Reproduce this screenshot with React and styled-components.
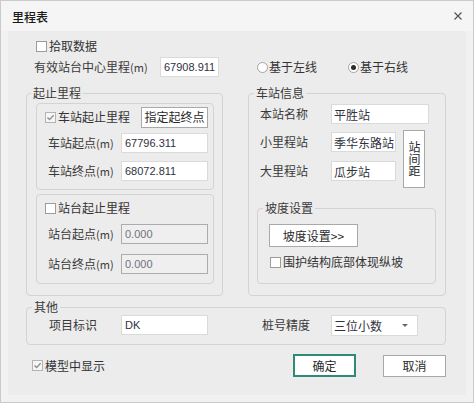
import React from "react";
import styled, { createGlobalStyle } from "styled-components";

const Global = createGlobalStyle`
  html, body { margin: 0; padding: 0; background: #ffffff; }
  * { box-sizing: border-box; }
  body { font-family: "Noto Sans CJK SC", "Noto Sans", sans-serif; font-size: 12px; color: #363636; }
`;

const FONT = `"Noto Sans CJK SC", "Noto Sans", sans-serif`;
const NUMFONT = `"Liberation Sans", "Noto Sans CJK SC", sans-serif`;

const Window = styled.div`
  width: 474px;
  height: 403px;
  border: 1px solid #cacaca;
  background: #f1f1f1;
  display: flex;
  flex-direction: column;
  font-family: ${FONT};
`;

const TitleBar = styled.div`
  height: 30px;
  background: #f5f5f5;
  display: flex;
  align-items: center;
  justify-content: space-between;
  padding: 0 10px 0 11px;
`;

const Title = styled.span`
  font-size: 12px;
  line-height: 16px;
  font-weight: 500;
  color: #1a1a1a;
  margin-top: 1px;
`;

const Close = styled.span`
  width: 10px;
  height: 10px;
  display: flex;
  align-items: center;
  justify-content: center;
`;

const Panel = styled.div`
  flex: 1;
  margin: 0 7px 7px 7px;
  background: #ececec;
  padding: 7px 20px 0 18px;
  display: flex;
  flex-direction: column;
`;

const Row = styled.div`
  display: flex;
  align-items: center;
  height: ${(p) => p.$h || 20}px;
  margin-top: ${(p) => p.$mt || 0}px;
  margin-left: ${(p) => p.$ml || 0}px;
  padding-left: ${(p) => p.$pl || 0}px;
  padding-right: ${(p) => p.$pr || 0}px;
  justify-content: ${(p) => p.$justify || "flex-start"};
`;

const Label = styled.span`
  font-size: 12px;
  line-height: 16px;
  color: #3a3a3a;
  white-space: nowrap;
  width: ${(p) => (p.$w ? `${p.$w}px` : "auto")};
  margin-left: ${(p) => p.$ml || 0}px;
  flex: none;
`;

const Unit = styled.span`
  font-size: 11px;
`;

const Input = styled.div`
  width: ${(p) => p.$w}px;
  height: ${(p) => p.$h || 20}px;
  border: 1px solid ${(p) => (p.$disabled ? "#acacac" : "#dadada")};
  background: ${(p) => (p.$disabled ? "#efefef" : "#ffffff")};
  display: flex;
  align-items: center;
  padding-left: ${(p) => p.$pl ?? 3}px;
  font-family: ${(p) => (p.$cjk ? FONT : NUMFONT)};
  font-size: ${(p) => (p.$cjk ? 12 : 11)}px;
  color: ${(p) => (p.$disabled ? "#6f7280" : "#30323d")};
  white-space: nowrap;
  overflow: hidden;
  flex: none;
  margin-left: ${(p) => p.$ml || 0}px;
`;

const Button = styled.div`
  width: ${(p) => p.$w}px;
  height: ${(p) => p.$h}px;
  border: ${(p) => (p.$primary ? "2px solid #2e8b7a" : "1px solid #a9a9a9")};
  background: #ffffff;
  display: flex;
  align-items: center;
  justify-content: center;
  font-size: 12px;
  line-height: 16px;
  color: #2a2a2a;
  flex: none;
  margin-left: ${(p) => p.$ml || 0}px;
  margin-top: ${(p) => p.$mt || 0}px;
`;

const VButton = styled(Button)`
  writing-mode: vertical-rl;
  line-height: 14px;
  letter-spacing: 0;
  padding-bottom: 1px;
`;

const CheckWrap = styled.label`
  display: flex;
  align-items: center;
  font-size: 12px;
  line-height: 16px;
  color: #333;
  white-space: nowrap;
`;

const Box = styled.span`
  width: 11px;
  height: 11px;
  border: 1px solid ${(p) => (p.$checked ? "#b4b4b4" : "#9c9c9c")};
  background: ${(p) => (p.$checked ? "#f6f6f6" : "#ffffff")};
  margin-right: 2px;
  display: flex;
  align-items: center;
  justify-content: center;
  flex: none;
`;

const RadioCircle = styled.span`
  width: 11px;
  height: 11px;
  border-radius: 50%;
  border: 1px solid #a3a3a3;
  background: #ffffff;
  margin-right: 1px;
  display: flex;
  align-items: center;
  justify-content: center;
  flex: none;
  &::after {
    content: "";
    width: 5px;
    height: 5px;
    border-radius: 50%;
    background: ${(p) => (p.$checked ? "#2b2b2b" : "transparent")};
  }
`;

const RadioWrap = styled.label`
  display: flex;
  align-items: center;
  width: ${(p) => p.$w || "auto"};
  font-size: 12px;
  line-height: 16px;
  color: #333;
  flex: none;
`;

const Group = styled.fieldset`
  margin: 0;
  margin-top: ${(p) => p.$mt || 0}px;
  margin-left: ${(p) => p.$ml || 0}px;
  padding: 0;
  border: 1px solid #d3d3d3;
  border-radius: 4px;
  width: ${(p) => p.$w}px;
  min-inline-size: 0;
  flex: none;
`;

const Legend = styled.legend`
  padding: 0 2px;
  margin-left: ${(p) => p.$ml ?? 5}px;
  font-size: 12px;
  line-height: 16px;
  color: #3a3a3a;
`;

const GroupBody = styled.div`
  display: flex;
  flex-direction: column;
  padding: ${(p) => p.$pad};
`;

const SubGroup = styled.div`
  border: 1px solid #d3d3d3;
  border-radius: 4px;
  display: flex;
  flex-direction: column;
  padding: ${(p) => p.$pad};
  margin-top: ${(p) => p.$mt || 0}px;
`;

const GroupsRow = styled.div`
  display: flex;
  gap: 25px;
  margin-top: 8px;
`;

const StationBlock = styled.div`
  display: flex;
  align-items: flex-start;
  margin-top: 6px;
`;

const StationCol = styled.div`
  display: flex;
  flex-direction: column;
  gap: 9px;
  margin-top: 2px;
`;

const SelectArrow = styled.span`
  margin-left: auto;
  margin-right: 9px;
  width: 0;
  height: 0;
  border-left: 3px solid transparent;
  border-right: 3px solid transparent;
  border-top: 3px solid #6a6a6a;
`;

const BottomRow = styled.div`
  display: flex;
  align-items: center;
  height: 23px;
  margin-top: 9px;
  padding-left: 6px;
`;

const Spacer = styled.span`
  flex: 1;
`;

const Check = ({ checked, children }) => (
  <CheckWrap>
    <Box $checked={checked}>
      {checked && (
        <svg width="9" height="9" viewBox="0 0 9 9">
          <path d="M1.5 4.5 L3.6 6.6 L7.6 2.2" fill="none" stroke="#8d8d8d" strokeWidth="1.4" />
        </svg>
      )}
    </Box>
    {children}
  </CheckWrap>
);

const Radio = ({ checked, children, w }) => (
  <RadioWrap $w={w}>
    <RadioCircle $checked={checked} />
    {children}
  </RadioWrap>
);

export default function App() {
  return (
    <>
      <Global />
      <Window>
        <TitleBar>
          <Title>里程表</Title>
          <Close>
            <svg width="8" height="8" viewBox="0 0 8 8">
              <path d="M0.5 0.5 L7.5 7.5 M7.5 0.5 L0.5 7.5" stroke="#555" strokeWidth="1.2" />
            </svg>
          </Close>
        </TitleBar>
        <Panel>
          <Row $h={16} $ml={10}>
            <Check>拾取数据</Check>
          </Row>
          <Row $mt={3} $ml={8}>
            <Label $w={126}>有效站台中心里程<Unit>(m)</Unit></Label>
            <Input $w={59}>67908.911</Input>
            <Row $ml={38}>
              <Radio w="91px">基于左线</Radio>
              <Radio checked>基于右线</Radio>
            </Row>
          </Row>

          <GroupsRow>
            <Group $w={197}>
              <Legend $ml={4}>起止里程</Legend>
              <GroupBody $pad="2px 8px 11px 9px">
                <SubGroup $pad="3px 5px 8px 8px">
                  <Row $justify="space-between">
                    <Check checked>车站起止里程</Check>
                    <Button $w={67} $h={21}>指定起终点</Button>
                  </Row>
                  <Row $mt={6} $justify="space-between">
                    <Label $ml={3}>车站起点<Unit>(m)</Unit></Label>
                    <Input $w={87}>67796.311</Input>
                  </Row>
                  <Row $mt={8} $justify="space-between">
                    <Label $ml={3}>车站终点<Unit>(m)</Unit></Label>
                    <Input $w={87}>68072.811</Input>
                  </Row>
                </SubGroup>
                <SubGroup $mt={4} $pad="5px 5px 9px 8px">
                  <Row $h={16}>
                    <Check>站台起止里程</Check>
                  </Row>
                  <Row $mt={8} $justify="space-between">
                    <Label $ml={3}>站台起点<Unit>(m)</Unit></Label>
                    <Input $w={87} $disabled>0.000</Input>
                  </Row>
                  <Row $mt={10} $justify="space-between">
                    <Label $ml={3}>站台终点<Unit>(m)</Unit></Label>
                    <Input $w={87} $disabled>0.000</Input>
                  </Row>
                </SubGroup>
              </GroupBody>
            </Group>

            <Group $w={198}>
              <Legend>车站信息</Legend>
              <GroupBody $pad="3px 0 10px 11px">
                <Row>
                  <Label $w={71}>本站名称</Label>
                  <Input $w={98} $cjk $pl={2}>平胜站</Input>
                </Row>
                <StationBlock>
                  <StationCol>
                    <Row>
                      <Label $w={71}>小里程站</Label>
                      <Input $w={65} $cjk $pl={2}>季华东路站</Input>
                    </Row>
                    <Row>
                      <Label $w={71}>大里程站</Label>
                      <Input $w={65} $cjk $pl={2}>瓜步站</Input>
                    </Row>
                  </StationCol>
                  <VButton $w={22} $h={58} $ml={7}>站间距</VButton>
                </StationBlock>
                <Group $w={179} $mt={12} $ml={-3}>
                  <Legend>坡度设置</Legend>
                  <GroupBody $pad="8px 0 13px 11px">
                    <Button $w={89} $h={23}>坡度设置&gt;&gt;</Button>
                    <Row $h={16} $mt={7} $pl={1}>
                      <Check>围护结构底部体现纵坡</Check>
                    </Row>
                  </GroupBody>
                </Group>
              </GroupBody>
            </Group>
          </GroupsRow>

          <Group $w={420} $mt={3}>
            <Legend>其他</Legend>
            <GroupBody $pad="0 0 9px 22px">
              <Row>
                <Label $w={72}>项目标识</Label>
                <Input $w={87}>DK</Input>
                <Label $w={69} $ml={54}>桩号精度</Label>
                <Input $w={87} $h={21} $cjk $pl={2}>
                  三位小数
                  <SelectArrow />
                </Input>
              </Row>
            </GroupBody>
          </Group>

          <BottomRow>
            <Check checked>模型中显示</Check>
            <Spacer />
            <Button $primary $w={63} $h={23}>确定</Button>
            <Button $w={63} $h={22} $ml={27}>取消</Button>
          </BottomRow>
        </Panel>
      </Window>
    </>
  );
}
